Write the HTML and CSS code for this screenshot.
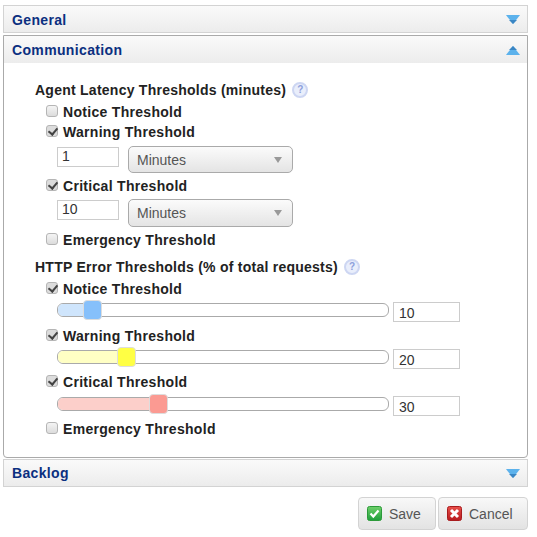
FILE: index.html
```html
<!DOCTYPE html>
<html lang="en">
<head>
    <meta charset="UTF-8">
    <title>Settings</title>
    <link rel="stylesheet" href="styles.css">
</head>
<body>
    <div class="accordion">
        <div class="acc-head">
            <span>General</span>
            <svg class="arrow" width="14" height="9" viewBox="0 0 14 9"><path d="M0 0H14L7 9Z" fill="#5cb2ec"/><path d="M3 5H11L7 9Z" fill="#3a86c4"/></svg>
        </div>

        <div class="acc-open">
            <div class="acc-head inner">
                <span>Communication</span>
                <svg class="arrow" width="14" height="9" viewBox="0 0 14 9"><path d="M0 9H14L7 0Z" fill="#5cb2ec"/><path d="M3 4H11L7 0Z" fill="#3a86c4"/></svg>
            </div>
            <div class="acc-body">
                <h3 class="group-title">Agent Latency Thresholds (minutes) <span class="help">?</span></h3>

                <label class="check"><span class="box"></span>Notice Threshold</label>
                <label class="check"><span class="box on"></span>Warning Threshold</label>
                <div class="unit-row">
                    <div class="text-input small">1</div>
                    <div class="select">Minutes<span class="caret"></span></div>
                </div>
                <label class="check tight"><span class="box on"></span>Critical Threshold</label>
                <div class="unit-row close">
                    <div class="text-input small">10</div>
                    <div class="select">Minutes<span class="caret"></span></div>
                </div>
                <label class="check tight"><span class="box"></span>Emergency Threshold</label>

                <h3 class="group-title second">HTTP Error Thresholds (% of total requests) <span class="help">?</span></h3>

                <label class="check"><span class="box on"></span>Notice Threshold</label>
                <div class="slider-row">
                    <div class="slider">
                        <div class="fill blue" style="width: 36px"></div>
                        <div class="thumb blue-thumb" style="left: 25px"></div>
                    </div>
                    <div class="text-input wide">10</div>
                </div>
                <label class="check"><span class="box on"></span>Warning Threshold</label>
                <div class="slider-row compact">
                    <div class="slider">
                        <div class="fill yellow" style="width: 68px"></div>
                        <div class="thumb yellow-thumb" style="left: 59px"></div>
                    </div>
                    <div class="text-input wide">20</div>
                </div>
                <label class="check"><span class="box on"></span>Critical Threshold</label>
                <div class="slider-row compact low">
                    <div class="slider">
                        <div class="fill red" style="width: 100px"></div>
                        <div class="thumb red-thumb" style="left: 91px"></div>
                    </div>
                    <div class="text-input wide">30</div>
                </div>
                <label class="check"><span class="box"></span>Emergency Threshold</label>
            </div>
        </div>

        <div class="acc-head last">
            <span>Backlog</span>
            <svg class="arrow" width="14" height="9" viewBox="0 0 14 9"><path d="M0 0H14L7 9Z" fill="#5cb2ec"/><path d="M3 5H11L7 9Z" fill="#3a86c4"/></svg>
        </div>
    </div>

    <div class="actions">
        <button class="btn">
            <svg width="15" height="15" viewBox="0 0 15 15">
                <defs><linearGradient id="green" x1="0" y1="0" x2="0" y2="1"><stop offset="0" stop-color="#6fd06a"/><stop offset="1" stop-color="#1f9e3c"/></linearGradient></defs>
                <rect x="0.5" y="0.5" width="14" height="14" rx="2" fill="url(#green)" stroke="#2c9a3a"/>
                <path d="M3.5 7.5L6.3 10.5L11.5 4.5" fill="none" stroke="#fff" stroke-width="2.2"/>
            </svg>
            Save
        </button>
        <button class="btn">
            <svg width="15" height="15" viewBox="0 0 15 15">
                <defs><linearGradient id="red" x1="0" y1="0" x2="0" y2="1"><stop offset="0" stop-color="#e8504a"/><stop offset="1" stop-color="#b81a1e"/></linearGradient></defs>
                <rect x="0.5" y="0.5" width="14" height="14" rx="2" fill="url(#red)" stroke="#a81c1e"/>
                <path d="M4 4L11 11M11 4L4 11" fill="none" stroke="#fff" stroke-width="3"/>
            </svg>
            Cancel
        </button>
    </div>
</body>
</html>
```

FILE: styles.css
```css
* {
    margin: 0;
    padding: 0;
    box-sizing: border-box;
}

body {
    font-family: "Liberation Sans", Arial, sans-serif;
    font-size: 14px;
    color: #222;
    background: #fff;
    padding: 5px 9px 0 3px;
}

.acc-head {
    display: flex;
    justify-content: space-between;
    align-items: center;
    height: 28px;
    padding: 1px 7px 0 8px;
    background: linear-gradient(#fafafa, #ececec);
    border: 1px solid #d3d3d3;
    font-weight: bold;
    color: #0b2f80;
    letter-spacing: 0.35px;
}

.acc-head.last {
    margin-top: 1px;
    padding-top: 0;
}

.acc-open {
    margin-top: 2px;
    border: 1px solid #aaa;
    border-radius: 0 0 4px 4px;
    height: 423px;
}

.acc-head.inner {
    height: 27px;
    border: 0;
    padding: 1px 7px 0 8px;
}

.acc-body {
    padding: 17px 0 0 31px;
}

.group-title {
    display: flex;
    align-items: center;
    gap: 6px;
    height: 20px;
    margin-bottom: 2px;
    font-size: 14px;
    letter-spacing: 0.25px;
    color: #222;
}

.group-title.second {
    margin-top: 6px;
    height: 22px;
    margin-bottom: 1px;
}

.help {
    width: 16px;
    height: 16px;
    border-radius: 50%;
    border: 2px solid #cdd6f2;
    background: #e9eefb;
    color: #8d9fdc;
    font-size: 10px;
    line-height: 12px;
    text-align: center;
    letter-spacing: 0;
}

.check {
    display: flex;
    align-items: center;
    gap: 5px;
    height: 20px;
    padding-left: 11px;
    font-weight: bold;
    letter-spacing: 0.3px;
}

.check.tight {
    margin-top: 3px;
}

.box {
    position: relative;
    width: 12px;
    height: 12px;
    margin-top: -2px;
    border: 1px solid #b5b5b5;
    border-radius: 3px;
    background: linear-gradient(#f4f4f4, #dcdcdc);
}

.box.on {
    background: #dcdcdc;
}

.box.on::after {
    content: "";
    position: absolute;
    left: 3px;
    top: 0;
    width: 4px;
    height: 7px;
    border: solid #444;
    border-width: 0 2px 2px 0;
    transform: rotate(40deg);
}

.unit-row {
    display: flex;
    align-items: flex-start;
    gap: 9px;
    height: 27px;
    padding-left: 22px;
    margin-top: 4px;
}

.unit-row.close {
    height: 28px;
    margin-top: 3px;
}

.text-input {
    border: 1px solid #ccc;
    background: #fff;
    color: #333;
    font-size: 14px;
    padding-left: 4px;
}

.text-input.small {
    width: 62px;
    height: 20px;
    line-height: 17px;
    margin-top: 1px;
}

.text-input.wide {
    width: 67px;
    height: 20px;
    line-height: 21px;
    margin-top: 2px;
    padding-left: 5px;
}

.select {
    display: flex;
    justify-content: space-between;
    align-items: center;
    width: 165px;
    height: 100%;
    padding: 0 10px 0 8px;
    border: 1px solid #aaa;
    border-radius: 5px;
    background: linear-gradient(#fbfbfb, #e4e4e4);
    color: #555;
    font-size: 14px;
}

.caret {
    border-left: 4px solid transparent;
    border-right: 4px solid transparent;
    border-top: 6px solid #999;
}

.slider-row {
    display: flex;
    align-items: flex-start;
    gap: 4px;
    height: 22px;
    padding-left: 22px;
    margin-top: 1px;
    margin-bottom: 4px;
}

.slider-row.compact {
    margin-bottom: 3px;
}

.slider-row.low {
    margin-top: 2px;
}

.slider {
    position: relative;
    width: 332px;
    height: 14px;
    margin-top: 3px;
    border: 1px solid #aaa;
    border-radius: 6px;
    background: #fff;
}

.fill {
    height: 100%;
    border-radius: 5px 0 0 5px;
}

.fill.blue { background: #cfe5fc; }
.fill.yellow { background: #ffffc4; }
.fill.red { background: #fccfca; }

.thumb {
    position: absolute;
    top: -4px;
    width: 19px;
    height: 20px;
    border: 1px solid #ddd;
    border-radius: 4px;
}

.blue-thumb { background: #86c0fb; }
.yellow-thumb { background: #ffff44; }
.red-thumb { background: #fb9a92; }

.actions {
    display: flex;
    justify-content: flex-end;
    gap: 2px;
    margin-top: 10px;
}

.btn {
    display: flex;
    align-items: center;
    gap: 7px;
    height: 33px;
    padding: 0 8px;
    border: 1px solid #d3d3d3;
    border-radius: 4px;
    background: linear-gradient(#f8f8f8, #e3e3e3);
    font-family: inherit;
    font-size: 14px;
    color: #555;
}

.btn:first-child {
    width: 78px;
}

.btn:last-child {
    width: 90px;
}
```
